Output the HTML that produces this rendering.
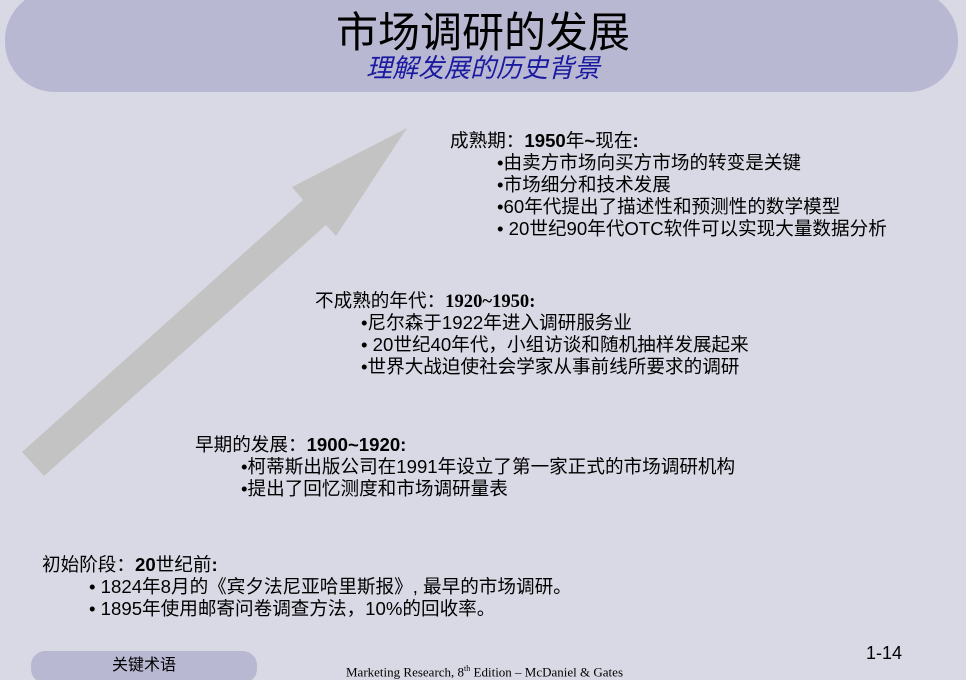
<!DOCTYPE html>
<html style="height:680px;overflow:hidden"><head><meta charset="utf-8"><style>
body{margin:0;width:966px;height:680px;background:#d9d9e5;position:relative;overflow:hidden;font-family:"Liberation Sans","Noto Sans CJK SC",sans-serif;color:#000}
.t{position:absolute;white-space:nowrap;font-size:18.6px;line-height:22px}
.pill{position:absolute;background:#b8b8d2}
</style></head><body>
<div class="pill" style="left:5px;top:-10px;width:953px;height:102px;border-radius:50px"></div>
<div class="t" style="left:0;width:966px;text-align:center;top:6px;font-size:42px;line-height:48px;font-family:'Noto Sans CJK SC',sans-serif">市场调研的发展</div>
<div class="t" style="left:0;width:966px;text-align:center;top:52px;font-size:26px;line-height:30px;color:#1a1aa0;font-style:italic;font-family:'Noto Sans CJK SC',sans-serif">理解发展的历史背景</div>
<svg style="position:absolute;left:0;top:0" width="966" height="680"><polygon points="22,452 303,200 292,187 407,128 336,236 326,225 44,476" fill="#c3c3c3"/></svg>
<div class="t" style="left:450px;top:130px">成熟期：<b>1950</b>年<b>~</b>现在<b>:</b></div>
<div class="t" style="left:497px;top:152px">•由卖方市场向买方市场的转变是关键</div>
<div class="t" style="left:497px;top:174px">•市场细分和技术发展</div>
<div class="t" style="left:497px;top:196px">•60年代提出了描述性和预测性的数学模型</div>
<div class="t" style="left:497px;top:218px">• 20世纪90年代OTC软件可以实现大量数据分析</div>
<div class="t" style="left:315px;top:290px">不成熟的年代：<b style="font-family:'Liberation Serif',serif">1920~1950:</b></div>
<div class="t" style="left:361px;top:312px">•尼尔森于1922年进入调研服务业</div>
<div class="t" style="left:361px;top:334px">• 20世纪40年代，小组访谈和随机抽样发展起来</div>
<div class="t" style="left:361px;top:356px">•世界大战迫使社会学家从事前线所要求的调研</div>
<div class="t" style="left:195px;top:434px">早期的发展：<b>1900~1920:</b></div>
<div class="t" style="left:241px;top:456px">•柯蒂斯出版公司在1991年设立了第一家正式的市场调研机构</div>
<div class="t" style="left:241px;top:478px">•提出了回忆测度和市场调研量表</div>
<div class="t" style="left:42px;top:554px">初始阶段：<b>20</b>世纪前<b>:</b></div>
<div class="t" style="left:89px;top:576px">• 1824年8月的《宾夕法尼亚哈里斯报》, 最早的市场调研。</div>
<div class="t" style="left:89px;top:598px">• 1895年使用邮寄问卷调查方法，10%的回收率。</div>
<div class="t" style="left:866px;top:642px;font-size:18px">1-14</div>
<div class="pill" style="left:31px;top:651px;width:226px;height:32px;border-radius:14px"></div>
<div class="t" style="left:31px;width:226px;text-align:center;top:655px;font-size:16px">关键术语</div>
<div class="t" style="left:346px;top:658px;font-size:13px;font-family:'Liberation Serif',serif">Marketing Research, 8<sup style="font-size:8px">th</sup> Edition – McDaniel &amp; Gates</div>
<div class="t" style="left:380px;top:674px;font-size:13px;font-family:'Liberation Serif',serif">Copyright 2008 John Wiley &amp; Sons, Inc.</div>
</body></html>
